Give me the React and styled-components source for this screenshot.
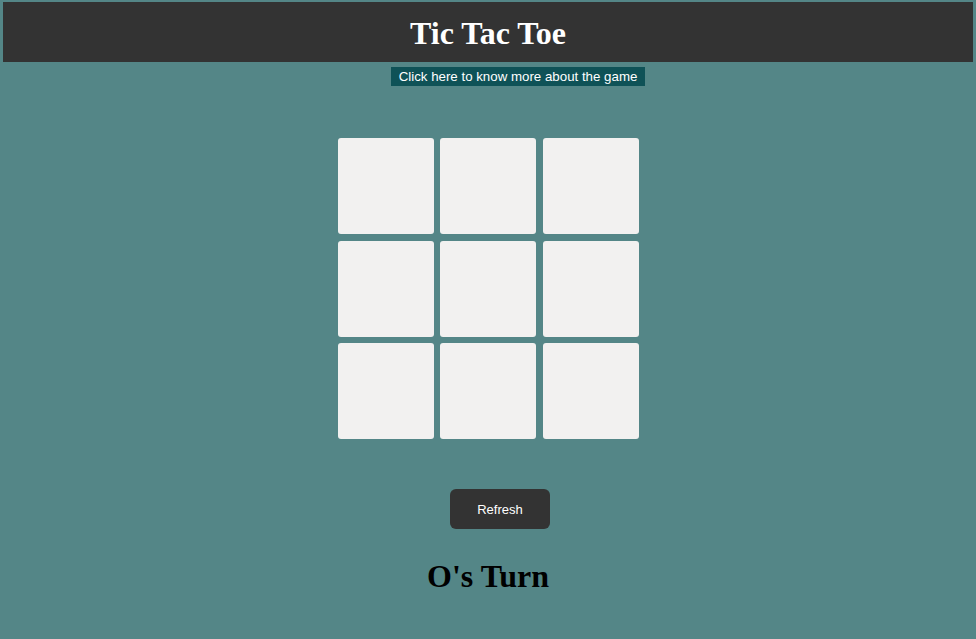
import styled, { createGlobalStyle } from "styled-components";

const GlobalStyle = createGlobalStyle`
  html, body {
    margin: 0;
    padding: 0;
    background: #548687;
  }
  body {
    min-height: 639px;
    font-family: "Liberation Serif", "Times New Roman", serif;
  }
`;

const Page = styled.div`
  display: flex;
  flex-direction: column;
  align-items: center;
  padding: 2px 3px 0 3px;
`;

const Header = styled.header`
  width: 100%;
  height: 60px;
  background: #333333;
  display: flex;
  align-items: center;
  justify-content: center;

  h1 {
    margin: 0;
    color: #ffffff;
    font-family: "Liberation Serif", "Times New Roman", serif;
    font-weight: bold;
    font-size: 32px;
    line-height: 1;
    padding-top: 2px;
  }
`;

const InfoLink = styled.a`
  margin-top: 5px;
  margin-left: 60px;
  background: #0f5257;
  color: #ffffff;
  font-family: "Liberation Sans", Arial, sans-serif;
  font-size: 13.3px;
  font-weight: 500;
  line-height: 19px;
  padding: 0 8px;
  text-decoration: none;
  cursor: pointer;
`;

const Board = styled.div`
  margin-top: 52px;
  display: grid;
  grid-template-columns: repeat(3, 96px);
  grid-auto-rows: 96px;
  gap: 6.5px;
`;

const Cell = styled.button`
  border: none;
  border-radius: 3px;
  background: #f2f1f0;
  padding: 0;
  cursor: pointer;
`;

const RefreshButton = styled.button`
  margin-top: 50px;
  margin-left: 24px;
  width: 100px;
  height: 40px;
  border: none;
  border-radius: 6px;
  background: #333333;
  color: #ffffff;
  font-family: "Liberation Sans", Arial, sans-serif;
  font-size: 13px;
  cursor: pointer;
`;

const Status = styled.h2`
  margin: 29px 0 0 0;
  color: #000000;
  font-family: "Liberation Serif", "Times New Roman", serif;
  font-weight: bold;
  font-size: 32px;
  line-height: 36px;
`;

const App = () => {
  const cells = Array(9).fill(null);
  return (
    <>
      <GlobalStyle />
      <Page>
        <Header>
          <h1>Tic Tac Toe</h1>
        </Header>
        <InfoLink>Click here to know more about the game</InfoLink>
        <Board>
          {cells.map((c, i) => (
            <Cell key={i}>{c}</Cell>
          ))}
        </Board>
        <RefreshButton>Refresh</RefreshButton>
        <Status>O's Turn</Status>
      </Page>
    </>
  );
};

export default App;
